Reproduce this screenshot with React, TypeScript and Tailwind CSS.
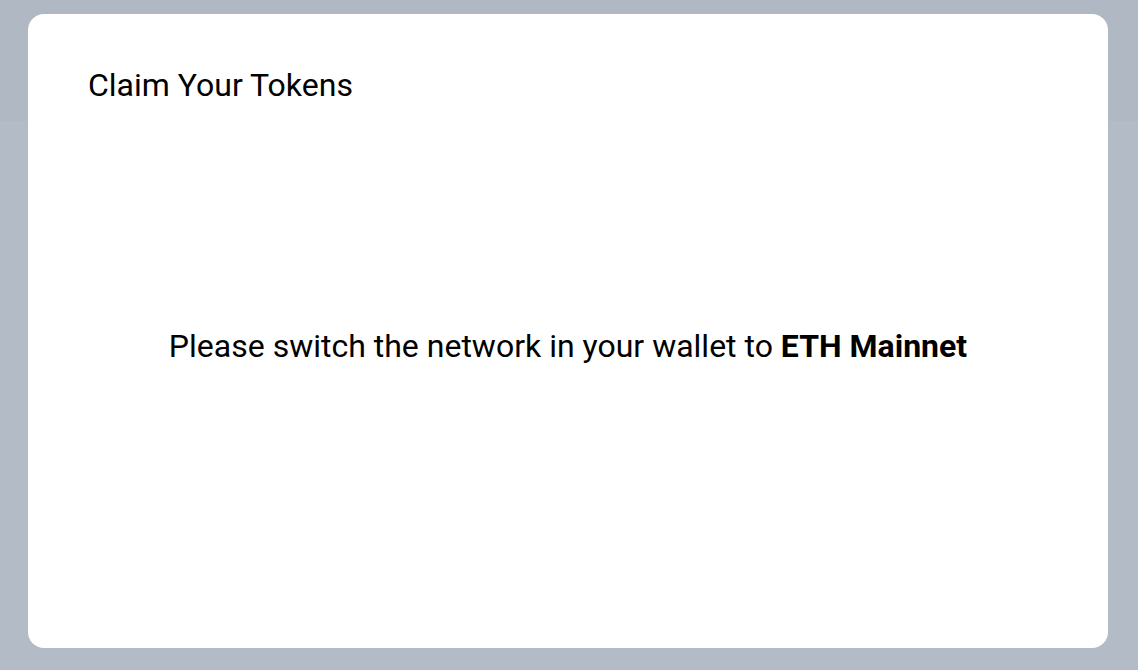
export default function App() {
  return (
    <div
      className="w-[1138px] h-[670px] bg-[linear-gradient(to_bottom,#b0b9c3_121px,#b3bcc6_121px)] pl-[28px] pr-[30px] pt-[14px] pb-[22px]"
      style={{ fontFamily: "Roboto, 'Noto Sans', sans-serif" }}
    >
      <div className="h-[634px] bg-white rounded-[16px] flex flex-col">
        <div className="pt-[52px] px-[60px] text-[32px] leading-[38px] text-black">
          Claim Your Tokens
        </div>
        <div className="flex-1 flex items-center justify-center pb-[60px] text-[32px] leading-[38px] text-black">
          <p>
            Please switch the network in your wallet to <span className="font-bold">ETH Mainnet</span>
          </p>
        </div>
      </div>
    </div>
  );
}
